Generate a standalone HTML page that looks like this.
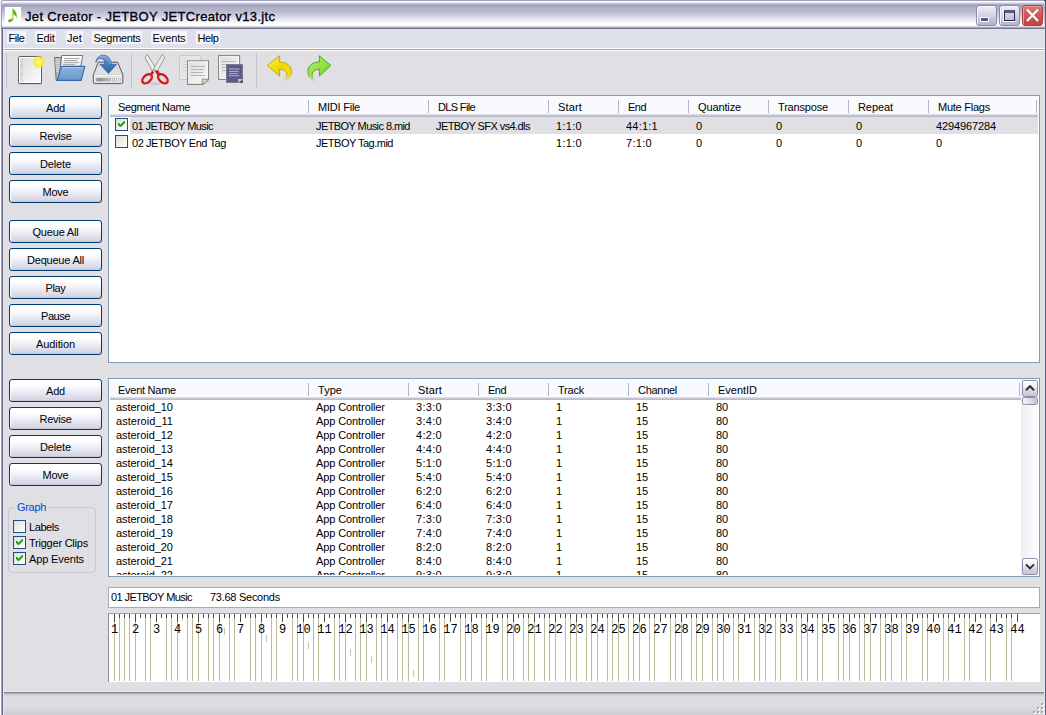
<!DOCTYPE html>
<html><head><meta charset="utf-8"><title>Jet Creator</title><style>html,body{margin:0;padding:0;}
body{width:1046px;height:715px;overflow:hidden;background:#e0dfe3;font-family:"Liberation Sans",sans-serif;font-size:11px;color:#000;position:relative;}
.abs{position:absolute;}
.t{position:absolute;white-space:nowrap;line-height:13px;height:13px;}
#titlebar{left:0;top:0;width:1046px;height:29px;background:linear-gradient(to bottom,#a09dba 0.5px,#ffffff 1.5px,#e6e6ee 2.5px,#c8c7d8 3.5px,#abaac4 4.5px,#a4a4c0 5.5px,#a8a8c2 6.5px,#aeaec6 7.5px,#b2b2c9 8.5px,#b4b5cb 9.5px,#b6b7cc 10.5px,#babbcf 11.5px,#c0c1d3 12.5px,#c4c5d6 13.5px,#c9cada 14.5px,#cfd0de 15.5px,#d5d6e2 16.5px,#dbdce6 17.5px,#e2e3eb 18.5px,#e8e9ef 19.5px,#eeeef3 20.5px,#f3f3f7 21.5px,#f8f8fa 22.5px,#fcfcfd 23.5px,#ffffff 24.5px,#fbfaf9 25.5px,#dedce0 26.5px,#a8a8bc 27.5px,#73738f 28.5px);}
#title{left:25px;top:9px;font-weight:normal;font-size:13px;line-height:16px;height:16px;color:#000010;letter-spacing:0.33px;-webkit-text-stroke:0.35px #000010;}
#menubar{left:3px;top:29px;width:1041px;height:19px;background:#dfe1ea;}
.mi{position:absolute;top:31px;height:13px;line-height:14px;background:#f5f5fb;white-space:nowrap;text-align:center;}
.btn{position:absolute;left:9px;width:91px;height:21px;border:1px solid #003c74;border-radius:3px;background:linear-gradient(to bottom,#ffffff 0%,#ffffff 20%,#f4f4fc 42%,#e8e8f2 62%,#dcdce8 82%,#d2d0e1 100%);box-shadow:inset 1px 0 0 #fff,inset 0 -1px 0 #c9c5d9;text-align:center;line-height:23px;}
.list{position:absolute;left:108px;width:930px;border:1px solid #7f9db9;background:#fff;}
.hdr{position:absolute;height:18px;background:#f9fafd;}
.hdr:after{content:"";position:absolute;left:0;right:0;top:18px;height:3px;background:linear-gradient(to bottom,#dcdce6 0,#dcdce6 1px,#c8c8d6 1px,#c8c8d6 2px,#b8b8c8 2px,#b8b8c8 3px);}
.sep{position:absolute;width:1px;background:#b4b4c8;height:13px;}
.cb{position:absolute;width:11px;height:11px;border:1px solid #1c5180;background:linear-gradient(135deg,#dcdcd7 0%,#f3f3f0 60%,#ffffff 100%);}
.gl{position:absolute;width:21px;text-align:center;font-family:"Liberation Mono",monospace;font-size:12px;line-height:14px;height:14px;white-space:nowrap;}
.capb{position:absolute;top:5px;width:19px;height:19px;border:1px solid #8a8aae;border-radius:3px;background:linear-gradient(to bottom,#ececf4 0%,#dcdce8 35%,#c4c4d8 70%,#b4b4cc 100%);box-shadow:inset 1px 1px 0 #f8f8fc;}
.capx{border-color:#b04444;background:linear-gradient(to bottom,#e07a74 0%,#d45c58 40%,#c84a48 75%,#c04444 100%);box-shadow:inset 1px 1px 0 #e89890;}
.sbb{position:absolute;left:1022px;width:14px;height:15px;border:1px solid #8e8eac;border-radius:2.5px;background:linear-gradient(to bottom,#ffffff 0%,#f4f4f9 30%,#d6d6e4 65%,#c4c4d8 100%);}
</style></head><body>
<div id="titlebar" class="abs"></div>
<div class="abs" style="left:5px;top:7px;width:16px;height:16px;background:#fff"></div>
<svg class="abs" style="left:5px;top:7px" width="16" height="16" viewBox="0 0 16 16"><ellipse cx="5.8" cy="13.3" rx="2.4" ry="1.6" transform="rotate(-25 5.8 13.3)" fill="#7cc41c"/><circle cx="4.3" cy="14.1" r="0.8" fill="#2c4a10"/><path d="M7.4 12.8 V1.2 C8.8 2.2 11.2 4 11.7 7.2 C11.9 9 11.7 10.6 11.5 11.8 C11.2 9.4 10 7.6 8.4 7 V13 Z" fill="#7cc41c"/><path d="M8.8 3 l1.2 1.2 M8.8 5 l2 1.8 M9.8 7.4 l1.2 1.6" stroke="#3c6414" stroke-width="0.9" stroke-dasharray="0.8 0.6" fill="none"/></svg>

<div id="title" class="t">Jet Creator - JETBOY JETCreator v13.jtc</div>
<div class="capb" style="left:976px"></div>
<div class="abs" style="left:980px;top:17px;width:9px;height:5px;background:#fff"></div>
<div class="abs" style="left:981px;top:18px;width:7px;height:3px;background:#55557e"></div>
<div class="capb" style="left:999px"></div>
<div class="abs" style="left:1003px;top:10px;width:12px;height:12px;background:#fff"></div>
<div class="abs" style="left:1004px;top:10px;width:9px;height:7px;border:1px solid #26264a;border-top:3px solid #55557e;background:linear-gradient(to bottom,#d4d4e2,#c0c0d4)"></div>
<div class="capb capx" style="left:1022px"></div>
<svg class="abs" style="left:1022px;top:5px" width="21" height="21" viewBox="0 0 21 21"><path d="M5 4.5 L16 16 M16 4.5 L5 16" stroke="#fff" stroke-width="2.2" stroke-linecap="butt" fill="none"/></svg>

<div class="abs" style="left:0;top:2px;width:1px;height:27px;background:#f0f0f6"></div>
<div class="abs" style="left:1px;top:1px;width:1px;height:28px;background:linear-gradient(to bottom,#b0b0c6,#9a9ab2 20%,#a6a6be 80%,#8c8ca6)"></div>
<div class="abs" style="left:0;top:0;width:2px;height:1px;background:#e8e8ee"></div><div class="abs" style="left:0;top:1px;width:1px;height:1px;background:#e8e8ee"></div>
<div class="abs" style="left:2px;top:2px;width:1px;height:2px;background:#f0f0f6"></div>
<div class="abs" style="left:1045px;top:0;width:1px;height:29px;background:#56567a"></div>
<div class="abs" style="left:1044px;top:2px;width:1px;height:27px;background:linear-gradient(to bottom,#e8e8f0,#b4b4ca 20%,#c4c4d6 60%,#e0e0ea 90%,#8c8ca6)"></div>
<div class="abs" style="left:1044px;top:0;width:2px;height:1px;background:#505070"></div><div class="abs" style="left:1045px;top:1px;width:1px;height:1px;background:#505070"></div><div class="abs" style="left:1044px;top:1px;width:1px;height:1px;background:#8c8ca8"></div>
<div id="menubar" class="abs"></div>
<div class="mi" style="left:7px;width:19px;letter-spacing:-0.43px">File</div>
<div class="mi" style="left:35px;width:21px;letter-spacing:-0.24px">Edit</div>
<div class="mi" style="left:66px;width:17px;letter-spacing:0.10px">Jet</div>
<div class="mi" style="left:92px;width:50px;letter-spacing:-0.32px">Segments</div>
<div class="mi" style="left:151px;width:36px;letter-spacing:-0.11px">Events</div>
<div class="mi" style="left:196px;width:24px;letter-spacing:-0.41px">Help</div>
<div class="abs" style="left:3px;top:48px;width:1041px;height:3px;background:#fff"></div>
<div class="abs" style="left:3px;top:49px;width:1041px;height:1px;background:#a0a0a6"></div>
<div class="abs" style="left:6px;top:53px;width:1px;height:35px;background:#c2c2cc"></div>
<div class="abs" style="left:131px;top:53px;width:1px;height:35px;background:#c2c2cc"></div>
<div class="abs" style="left:256px;top:53px;width:1px;height:35px;background:#c2c2cc"></div>
<svg class="abs" style="left:0;top:50px" width="350" height="42" viewBox="0 50 350 42">
<defs>
<linearGradient id="gPaper" x1="0" y1="0" x2="1" y2="1"><stop offset="0" stop-color="#dcdcdc"/><stop offset="1" stop-color="#fbfbfb"/></linearGradient>
<radialGradient id="gGlow"><stop offset="0" stop-color="#ffffff"/><stop offset="0.22" stop-color="#fbf66a"/><stop offset="0.6" stop-color="#f4ee28" stop-opacity="0.95"/><stop offset="1" stop-color="#f0ea20" stop-opacity="0"/></radialGradient>
<linearGradient id="gBlue" x1="0" y1="0" x2="0" y2="1"><stop offset="0" stop-color="#8fb4de"/><stop offset="0.5" stop-color="#7aa4d4"/><stop offset="1" stop-color="#6a98cc"/></linearGradient>
<linearGradient id="gGrayV" x1="0" y1="0" x2="0" y2="1"><stop offset="0" stop-color="#ffffff"/><stop offset="1" stop-color="#d8d8d8"/></linearGradient>
<linearGradient id="gDrive" x1="0" y1="0" x2="0" y2="1"><stop offset="0" stop-color="#dadada"/><stop offset="0.55" stop-color="#e2e2e2"/><stop offset="1" stop-color="#ececec"/></linearGradient>
<linearGradient id="gSlot" x1="0" y1="0" x2="1" y2="0"><stop offset="0" stop-color="#8c8c8c"/><stop offset="0.55" stop-color="#b8b8b8"/><stop offset="1" stop-color="#c4c4c4"/></linearGradient>
<linearGradient id="gArrowB" x1="0" y1="0" x2="0" y2="1"><stop offset="0" stop-color="#7fa8d8"/><stop offset="0.5" stop-color="#4a7cbc"/><stop offset="1" stop-color="#2f62a6"/></linearGradient>
<linearGradient id="gYel" x1="0" y1="0" x2="1" y2="1"><stop offset="0" stop-color="#fcee60"/><stop offset="0.5" stop-color="#efd800"/><stop offset="1" stop-color="#f4e020"/></linearGradient>
<linearGradient id="gGrn" x1="0" y1="0" x2="1" y2="1"><stop offset="0" stop-color="#b4ee78"/><stop offset="0.55" stop-color="#8ee040"/><stop offset="1" stop-color="#6cd010"/></linearGradient>
<linearGradient id="gFadeY" x1="0" y1="0" x2="0" y2="1"><stop offset="0" stop-color="#e0dfe3" stop-opacity="0"/><stop offset="0.75" stop-color="#e0dfe3" stop-opacity="0.9"/><stop offset="1" stop-color="#e0dfe3"/></linearGradient>
</defs>
<!-- new -->
<rect x="18.5" y="56.5" width="23" height="27" rx="1.2" fill="#fff" stroke="#5e5e5e"/>
<rect x="19" y="83" width="23" height="1.2" fill="#555" opacity="0.6"/>
<rect x="20" y="58" width="20" height="24" fill="url(#gPaper)"/>
<rect x="20" y="58" width="3" height="24" fill="#d4d4d4" opacity="0.6"/>
<rect x="21" y="65" width="1" height="1" fill="#999"/><rect x="21" y="74" width="1" height="1" fill="#999"/>
<circle cx="38.8" cy="62" r="6.9" fill="url(#gGlow)"/>
<!-- open -->
<path d="M54.5 57.5 H61.5 L60 80.5 H56.2 Z" fill="#b4b4b4" stroke="#6a6a6a" stroke-width="0.9"/>
<path d="M55.2 59.5H60M55.3 61.5H60M55.4 63.5H60M55.5 65.5H59.8M55.7 67.5H59.6M55.8 69.5H59.4M56 71.5H59.2" stroke="#dedede" stroke-width="0.9"/>
<path d="M61.7 55.5 H82.8 L80.6 67 L59.2 78 Z" fill="url(#gGrayV)" stroke="#6a6a6a" stroke-width="0.9"/>
<path d="M64 58.5H79.4M64 60.5H77M63.6 62.4H79M63.2 64.4H75" stroke="#a8a8a8" stroke-width="1"/>
<path d="M61.4 66.4 H84.8 L81.2 80.4 H57.2 Z" fill="url(#gBlue)" stroke="#3768ae" stroke-width="1.1" stroke-linejoin="round"/>
<path d="M62.4 67.6 H83.2" stroke="#b4d0ee" stroke-width="0.9"/>
<!-- save -->
<path d="M98.3 62.2 H117.6 L122.9 74.8 V82 Q122.9 83.6 121.3 83.6 H94.9 Q93.3 83.6 93.3 82 V74.8 Z" fill="url(#gDrive)" stroke="#585858" stroke-width="1" stroke-linejoin="round"/>
<path d="M94.2 75.2 H122 V82 Q122 82.8 121.2 82.8 H95 Q94.2 82.8 94.2 82 Z" fill="#e2e2e2"/>
<path d="M94.3 75.6 H121.9" stroke="#fafafa" stroke-width="1"/>
<path d="M94.6 74.6 H121.6" stroke="#c6c6c6" stroke-width="0.6"/>
<rect x="96.4" y="78" width="24.4" height="3.4" fill="url(#gSlot)"/>
<path d="M111.5 78V81.4M113.5 78V81.4M115.5 78V81.4M117.5 78V81.4M119.5 78V81.4" stroke="#ececec" stroke-width="0.9"/>
<path d="M95.9 62.4 C96 58 99.4 55.2 103.4 55.2 C107.8 55.2 110.9 58.4 111.2 64.3 H116.6 L108.5 73.4 L99.9 64.3 H105 C105 60.8 103.4 58.6 101 58.4 C98.6 58.3 96.8 60 95.9 62.4 Z" fill="url(#gArrowB)" stroke="#2a5a9e" stroke-width="0.7" stroke-linejoin="round"/>
<path d="M97 59.6 C98.2 57.4 100.4 56.3 103.2 56.3 C107 56.3 109.8 59 110.2 64" stroke="#9cc0e6" stroke-width="0.8" fill="none" opacity="0.8"/>
<!-- cut -->
<ellipse cx="154.8" cy="83.6" rx="6" ry="1.2" fill="#b8b8bc" opacity="0.6"/>
<path d="M147.2 54.3 L145 57.8 L152.4 70.8 L156.6 69.6 Z" fill="#ecece9" stroke="#8a8c86" stroke-width="0.8" stroke-linejoin="round"/>
<path d="M162.4 54.3 L164.7 57.8 L157.4 70.8 L153.2 69.6 Z" fill="#ecece9" stroke="#8a8c86" stroke-width="0.8" stroke-linejoin="round"/>
<path d="M152.2 70.6 L154.2 72.4 L152.2 75 L150.2 73.4 Z" fill="#d41a1a"/>
<path d="M154.6 70.8 L158.4 70.4 L160.4 74.6 L157.6 75.8 Z" fill="#d41a1a"/>
<ellipse cx="147.1" cy="78.7" rx="5.6" ry="3.5" transform="rotate(-42 147.1 78.7)" fill="none" stroke="#d41a1a" stroke-width="2.4"/>
<ellipse cx="162.9" cy="78.7" rx="5.6" ry="3.5" transform="rotate(42 162.9 78.7)" fill="none" stroke="#d41a1a" stroke-width="2.4"/>
<!-- copy -->
<rect x="179.5" y="55.5" width="21.4" height="24" rx="0.8" fill="#e6e6e6" stroke="#c6c6c6" stroke-width="0.9"/>
<path d="M183 61.5H190M183 64.5H190M183 67.5H190M183 70.5H190" stroke="#d2d2d2" stroke-width="1"/>
<path d="M187.6 60.8 H208.5 V79.6 L203 84.4 H187.6 Z" fill="#fff" stroke="#84867e" stroke-width="1.1" stroke-linejoin="round"/>
<path d="M189 62.2 H207.2 V79 L202.4 83 H189 Z" fill="url(#gPaper)"/>
<path d="M191 66.5H205M191 69.5H204M191 72.5H203M191 75.5H205" stroke="#b2b2b2" stroke-width="1"/>
<path d="M202.2 84 V79.2 H208.4 C207.6 82 205 83.6 202.2 84 Z" fill="#d0d0cc" stroke="#84867e" stroke-width="0.9" stroke-linejoin="round"/>
<!-- paste -->
<rect x="218.6" y="55.6" width="21" height="23.8" fill="#fff" stroke="#85877a" stroke-width="1.1"/>
<rect x="220.2" y="57.2" width="17.8" height="20.6" fill="url(#gPaper)"/>
<path d="M222 61.5H236M222 64.5H236M222 67.5H236M222 70.5H236" stroke="#b6b6b6" stroke-width="1"/>
<rect x="226.5" y="64.5" width="16" height="18" fill="#5b5b8b" stroke="#77778c" stroke-width="0.9"/>
<path d="M229 69H239.6" stroke="#9090b6" stroke-width="1.7"/>
<path d="M229 71.5H238.8M229 73.6H238M229 75.7H239.6" stroke="#b4b4d0" stroke-width="0.9"/>
<path d="M238 79 H242.6 V82.6 H238 Z" fill="#9a9a9a"/><path d="M240 82.6 L242.6 80.4 V82.6 Z" fill="#111"/><path d="M238 79 H242 L238 82 Z" fill="#c8c8c8"/>
<!-- undo -->
<path d="M267.2 65.4 L279.6 55.8 V62 C284 62 287.6 63.4 289.8 66.4 C292 69.6 292 73.6 290 76.6 C288.2 79.4 285.4 81.2 282.2 82 C285.4 79.6 287.4 76.8 286.8 73.6 C286.2 70.8 283.6 69.4 279.6 69.3 V76 Z" fill="url(#gYel)" stroke="#c0a000" stroke-width="0.9" stroke-linejoin="round"/>
<rect x="280.2" y="74.5" width="12.6" height="8.5" fill="url(#gFadeY)"/>
<!-- redo -->
<path d="M330.8 65.4 L319.4 55.8 V62 C315 62 311.4 63.4 309.4 66.4 C307.4 69.6 307.4 73.6 309.2 76.6 C310.8 79.2 313 80.8 316 81.4 C313.4 79.4 311.6 76.8 312.2 73.6 C312.8 70.8 315.4 69.4 319.4 69.3 V76 Z" fill="url(#gGrn)" stroke="#4e9e08" stroke-width="0.9" stroke-linejoin="round"/>
<rect x="307" y="74.5" width="11" height="8.5" fill="url(#gFadeY)"/>
</svg>

<div class="btn" style="top:96px;"><span style="letter-spacing:-0.20px">Add</span></div>
<div class="btn" style="top:124px;"><span style="letter-spacing:-0.27px">Revise</span></div>
<div class="btn" style="top:152px;"><span style="letter-spacing:-0.14px">Delete</span></div>
<div class="btn" style="top:180px;"><span style="letter-spacing:-0.23px">Move</span></div>
<div class="btn" style="top:220px;"><span style="letter-spacing:-0.19px">Queue All</span></div>
<div class="btn" style="top:248px;"><span style="letter-spacing:-0.21px">Dequeue All</span></div>
<div class="btn" style="top:276px;"><span style="letter-spacing:-0.35px">Play</span></div>
<div class="btn" style="top:304px;"><span style="letter-spacing:-0.44px">Pause</span></div>
<div class="btn" style="top:332px;"><span style="letter-spacing:-0.10px">Audition</span></div>
<div class="btn" style="top:379px;"><span style="letter-spacing:-0.20px">Add</span></div>
<div class="btn" style="top:407px;"><span style="letter-spacing:-0.27px">Revise</span></div>
<div class="btn" style="top:435px;"><span style="letter-spacing:-0.14px">Delete</span></div>
<div class="btn" style="top:463px;"><span style="letter-spacing:-0.23px">Move</span></div>
<div class="list" style="top:95px;height:266px;"></div>
<div class="hdr" style="left:110px;top:96px;width:928px"></div>
<div class="t" style="left:118px;top:101px;letter-spacing:-0.37px;">Segment Name</div>
<div class="sep" style="left:308px;top:100px"></div>
<div class="t" style="left:318px;top:101px;letter-spacing:-0.22px;">MIDI File</div>
<div class="sep" style="left:428px;top:100px"></div>
<div class="t" style="left:438px;top:101px;letter-spacing:-0.65px;">DLS File</div>
<div class="sep" style="left:548px;top:100px"></div>
<div class="t" style="left:558px;top:101px;letter-spacing:0.15px;">Start</div>
<div class="sep" style="left:618px;top:100px"></div>
<div class="t" style="left:628px;top:101px;letter-spacing:-0.53px;">End</div>
<div class="sep" style="left:688px;top:100px"></div>
<div class="t" style="left:698px;top:101px;letter-spacing:-0.13px;">Quantize</div>
<div class="sep" style="left:768px;top:100px"></div>
<div class="t" style="left:778px;top:101px;letter-spacing:-0.18px;">Transpose</div>
<div class="sep" style="left:848px;top:100px"></div>
<div class="t" style="left:858px;top:101px;letter-spacing:-0.08px;">Repeat</div>
<div class="sep" style="left:928px;top:100px"></div>
<div class="t" style="left:938px;top:101px;letter-spacing:-0.24px;">Mute Flags</div>
<div class="sep" style="left:1036px;top:100px"></div>
<div class="abs" style="left:130px;top:117px;width:908px;height:17px;background:#e0dfe3"></div>
<div class="cb" style="left:115px;top:118px"></div>
<svg class="abs" style="left:118px;top:121px" width="7" height="7" viewBox="0 0 7 7"><path d="M0 2 L0 4 L2 6 L3 6 L7 2 L7 0 L6 0 L2.5 3.6 L1 2 Z" fill="#21a121"/></svg>
<div class="t" style="left:132px;top:120px;letter-spacing:-0.58px;">01 JETBOY Music</div>
<div class="t" style="left:316px;top:120px;letter-spacing:-0.58px;">JETBOY Music 8.mid</div>
<div class="t" style="left:436px;top:120px;letter-spacing:-0.58px;">JETBOY SFX vs4.dls</div>
<div class="t" style="left:556px;top:120px;letter-spacing:0.30px;">1:1:0</div>
<div class="t" style="left:626px;top:120px;letter-spacing:0.23px;">44:1:1</div>
<div class="t" style="left:696px;top:120px;letter-spacing:-0.12px;">0</div>
<div class="t" style="left:776px;top:120px;letter-spacing:-0.12px;">0</div>
<div class="t" style="left:856px;top:120px;letter-spacing:-0.12px;">0</div>
<div class="t" style="left:936px;top:120px;letter-spacing:-0.12px;">4294967284</div>
<div class="cb" style="left:115px;top:135px"></div>
<div class="t" style="left:132px;top:137px;letter-spacing:-0.42px;">02 JETBOY End Tag</div>
<div class="t" style="left:316px;top:137px;letter-spacing:-0.50px;">JETBOY Tag.mid</div>
<div class="t" style="left:556px;top:137px;letter-spacing:0.30px;">1:1:0</div>
<div class="t" style="left:626px;top:137px;letter-spacing:0.30px;">7:1:0</div>
<div class="t" style="left:696px;top:137px;letter-spacing:-0.12px;">0</div>
<div class="t" style="left:776px;top:137px;letter-spacing:-0.12px;">0</div>
<div class="t" style="left:856px;top:137px;letter-spacing:-0.12px;">0</div>
<div class="t" style="left:936px;top:137px;letter-spacing:-0.12px;">0</div>
<div class="list" style="top:378px;height:197px;"></div>
<div class="hdr" style="left:110px;top:379px;width:911px"></div>
<div class="t" style="left:118px;top:384px;letter-spacing:-0.26px;">Event Name</div>
<div class="sep" style="left:308px;top:383px"></div>
<div class="t" style="left:318px;top:384px;letter-spacing:0.04px;">Type</div>
<div class="sep" style="left:408px;top:383px"></div>
<div class="t" style="left:418px;top:384px;letter-spacing:0.15px;">Start</div>
<div class="sep" style="left:478px;top:383px"></div>
<div class="t" style="left:488px;top:384px;letter-spacing:-0.53px;">End</div>
<div class="sep" style="left:548px;top:383px"></div>
<div class="t" style="left:558px;top:384px;letter-spacing:-0.22px;">Track</div>
<div class="sep" style="left:628px;top:383px"></div>
<div class="t" style="left:638px;top:384px;letter-spacing:-0.29px;">Channel</div>
<div class="sep" style="left:708px;top:383px"></div>
<div class="t" style="left:718px;top:384px;letter-spacing:-0.02px;">EventID</div>
<div class="sep" style="left:1019px;top:383px"></div>
<div class="abs" style="left:109px;top:400px;width:912px;height:175px;overflow:hidden">
<div class="t" style="left:7px;top:1px;letter-spacing:-0.05px;">asteroid_10</div>
<div class="t" style="left:207px;top:1px;letter-spacing:-0.10px;">App Controller</div>
<div class="t" style="left:307px;top:1px;letter-spacing:0.30px;">3:3:0</div>
<div class="t" style="left:377px;top:1px;letter-spacing:0.30px;">3:3:0</div>
<div class="t" style="left:447px;top:1px;letter-spacing:-0.12px;">1</div>
<div class="t" style="left:527px;top:1px;letter-spacing:-0.12px;">15</div>
<div class="t" style="left:607px;top:1px;letter-spacing:-0.12px;">80</div>
<div class="t" style="left:7px;top:15px;letter-spacing:0.03px;">asteroid_11</div>
<div class="t" style="left:207px;top:15px;letter-spacing:-0.10px;">App Controller</div>
<div class="t" style="left:307px;top:15px;letter-spacing:0.30px;">3:4:0</div>
<div class="t" style="left:377px;top:15px;letter-spacing:0.30px;">3:4:0</div>
<div class="t" style="left:447px;top:15px;letter-spacing:-0.12px;">1</div>
<div class="t" style="left:527px;top:15px;letter-spacing:-0.12px;">15</div>
<div class="t" style="left:607px;top:15px;letter-spacing:-0.12px;">80</div>
<div class="t" style="left:7px;top:29px;letter-spacing:-0.05px;">asteroid_12</div>
<div class="t" style="left:207px;top:29px;letter-spacing:-0.10px;">App Controller</div>
<div class="t" style="left:307px;top:29px;letter-spacing:0.30px;">4:2:0</div>
<div class="t" style="left:377px;top:29px;letter-spacing:0.30px;">4:2:0</div>
<div class="t" style="left:447px;top:29px;letter-spacing:-0.12px;">1</div>
<div class="t" style="left:527px;top:29px;letter-spacing:-0.12px;">15</div>
<div class="t" style="left:607px;top:29px;letter-spacing:-0.12px;">80</div>
<div class="t" style="left:7px;top:43px;letter-spacing:-0.05px;">asteroid_13</div>
<div class="t" style="left:207px;top:43px;letter-spacing:-0.10px;">App Controller</div>
<div class="t" style="left:307px;top:43px;letter-spacing:0.30px;">4:4:0</div>
<div class="t" style="left:377px;top:43px;letter-spacing:0.30px;">4:4:0</div>
<div class="t" style="left:447px;top:43px;letter-spacing:-0.12px;">1</div>
<div class="t" style="left:527px;top:43px;letter-spacing:-0.12px;">15</div>
<div class="t" style="left:607px;top:43px;letter-spacing:-0.12px;">80</div>
<div class="t" style="left:7px;top:57px;letter-spacing:-0.05px;">asteroid_14</div>
<div class="t" style="left:207px;top:57px;letter-spacing:-0.10px;">App Controller</div>
<div class="t" style="left:307px;top:57px;letter-spacing:0.30px;">5:1:0</div>
<div class="t" style="left:377px;top:57px;letter-spacing:0.30px;">5:1:0</div>
<div class="t" style="left:447px;top:57px;letter-spacing:-0.12px;">1</div>
<div class="t" style="left:527px;top:57px;letter-spacing:-0.12px;">15</div>
<div class="t" style="left:607px;top:57px;letter-spacing:-0.12px;">80</div>
<div class="t" style="left:7px;top:71px;letter-spacing:-0.05px;">asteroid_15</div>
<div class="t" style="left:207px;top:71px;letter-spacing:-0.10px;">App Controller</div>
<div class="t" style="left:307px;top:71px;letter-spacing:0.30px;">5:4:0</div>
<div class="t" style="left:377px;top:71px;letter-spacing:0.30px;">5:4:0</div>
<div class="t" style="left:447px;top:71px;letter-spacing:-0.12px;">1</div>
<div class="t" style="left:527px;top:71px;letter-spacing:-0.12px;">15</div>
<div class="t" style="left:607px;top:71px;letter-spacing:-0.12px;">80</div>
<div class="t" style="left:7px;top:85px;letter-spacing:-0.05px;">asteroid_16</div>
<div class="t" style="left:207px;top:85px;letter-spacing:-0.10px;">App Controller</div>
<div class="t" style="left:307px;top:85px;letter-spacing:0.30px;">6:2:0</div>
<div class="t" style="left:377px;top:85px;letter-spacing:0.30px;">6:2:0</div>
<div class="t" style="left:447px;top:85px;letter-spacing:-0.12px;">1</div>
<div class="t" style="left:527px;top:85px;letter-spacing:-0.12px;">15</div>
<div class="t" style="left:607px;top:85px;letter-spacing:-0.12px;">80</div>
<div class="t" style="left:7px;top:99px;letter-spacing:-0.05px;">asteroid_17</div>
<div class="t" style="left:207px;top:99px;letter-spacing:-0.10px;">App Controller</div>
<div class="t" style="left:307px;top:99px;letter-spacing:0.30px;">6:4:0</div>
<div class="t" style="left:377px;top:99px;letter-spacing:0.30px;">6:4:0</div>
<div class="t" style="left:447px;top:99px;letter-spacing:-0.12px;">1</div>
<div class="t" style="left:527px;top:99px;letter-spacing:-0.12px;">15</div>
<div class="t" style="left:607px;top:99px;letter-spacing:-0.12px;">80</div>
<div class="t" style="left:7px;top:113px;letter-spacing:-0.05px;">asteroid_18</div>
<div class="t" style="left:207px;top:113px;letter-spacing:-0.10px;">App Controller</div>
<div class="t" style="left:307px;top:113px;letter-spacing:0.30px;">7:3:0</div>
<div class="t" style="left:377px;top:113px;letter-spacing:0.30px;">7:3:0</div>
<div class="t" style="left:447px;top:113px;letter-spacing:-0.12px;">1</div>
<div class="t" style="left:527px;top:113px;letter-spacing:-0.12px;">15</div>
<div class="t" style="left:607px;top:113px;letter-spacing:-0.12px;">80</div>
<div class="t" style="left:7px;top:127px;letter-spacing:-0.05px;">asteroid_19</div>
<div class="t" style="left:207px;top:127px;letter-spacing:-0.10px;">App Controller</div>
<div class="t" style="left:307px;top:127px;letter-spacing:0.30px;">7:4:0</div>
<div class="t" style="left:377px;top:127px;letter-spacing:0.30px;">7:4:0</div>
<div class="t" style="left:447px;top:127px;letter-spacing:-0.12px;">1</div>
<div class="t" style="left:527px;top:127px;letter-spacing:-0.12px;">15</div>
<div class="t" style="left:607px;top:127px;letter-spacing:-0.12px;">80</div>
<div class="t" style="left:7px;top:141px;letter-spacing:-0.05px;">asteroid_20</div>
<div class="t" style="left:207px;top:141px;letter-spacing:-0.10px;">App Controller</div>
<div class="t" style="left:307px;top:141px;letter-spacing:0.30px;">8:2:0</div>
<div class="t" style="left:377px;top:141px;letter-spacing:0.30px;">8:2:0</div>
<div class="t" style="left:447px;top:141px;letter-spacing:-0.12px;">1</div>
<div class="t" style="left:527px;top:141px;letter-spacing:-0.12px;">15</div>
<div class="t" style="left:607px;top:141px;letter-spacing:-0.12px;">80</div>
<div class="t" style="left:7px;top:155px;letter-spacing:-0.05px;">asteroid_21</div>
<div class="t" style="left:207px;top:155px;letter-spacing:-0.10px;">App Controller</div>
<div class="t" style="left:307px;top:155px;letter-spacing:0.30px;">8:4:0</div>
<div class="t" style="left:377px;top:155px;letter-spacing:0.30px;">8:4:0</div>
<div class="t" style="left:447px;top:155px;letter-spacing:-0.12px;">1</div>
<div class="t" style="left:527px;top:155px;letter-spacing:-0.12px;">15</div>
<div class="t" style="left:607px;top:155px;letter-spacing:-0.12px;">80</div>
<div class="t" style="left:7px;top:169px;letter-spacing:-0.05px;">asteroid_22</div>
<div class="t" style="left:207px;top:169px;letter-spacing:-0.10px;">App Controller</div>
<div class="t" style="left:307px;top:169px;letter-spacing:0.30px;">9:3:0</div>
<div class="t" style="left:377px;top:169px;letter-spacing:0.30px;">9:3:0</div>
<div class="t" style="left:447px;top:169px;letter-spacing:-0.12px;">1</div>
<div class="t" style="left:527px;top:169px;letter-spacing:-0.12px;">15</div>
<div class="t" style="left:607px;top:169px;letter-spacing:-0.12px;">80</div>
</div>
<div class="abs" style="left:1021px;top:379px;width:17px;height:197px;background:linear-gradient(to right,#ebebf3,#f6f6fa 50%,#fdfdfe)"></div>
<div class="sbb" style="top:380px"></div>
<svg class="abs" style="left:1022px;top:380px" width="16" height="17" viewBox="0 0 16 17"><path d="M4 10.2 L8 6.2 L12 10.2" stroke="#2e2e36" stroke-width="2" fill="none" stroke-linejoin="miter"/></svg>
<div class="sbb" style="top:397px;height:6px;background:linear-gradient(to right,#f4f4f9,#dcdce8 50%,#c2c2d6)"></div>
<div class="sbb" style="top:558px"></div>
<svg class="abs" style="left:1022px;top:558px" width="16" height="17" viewBox="0 0 16 17"><path d="M4 6.4 L8 10.4 L12 6.4" stroke="#2e2e36" stroke-width="2" fill="none" stroke-linejoin="miter"/></svg>

<div class="abs" style="left:8px;top:507px;width:86px;height:64px;border:1px solid #c9c7d1;border-radius:4px;"></div>
<div class="t" style="left:14px;top:501px;padding:0 3px;background:#e0dfe3;color:#0046d5;letter-spacing:-0.32px">Graph</div>
<div class="cb" style="left:13px;top:520px"></div>
<div class="t" style="left:29px;top:521px;letter-spacing:-0.41px;">Labels</div>
<div class="cb" style="left:13px;top:536px"></div>
<svg class="abs" style="left:16px;top:539px" width="7" height="7" viewBox="0 0 7 7"><path d="M0 2 L0 4 L2 6 L3 6 L7 2 L7 0 L6 0 L2.5 3.6 L1 2 Z" fill="#21a121"/></svg>
<div class="t" style="left:29px;top:537px;letter-spacing:-0.23px;">Trigger Clips</div>
<div class="cb" style="left:13px;top:552px"></div>
<svg class="abs" style="left:16px;top:555px" width="7" height="7" viewBox="0 0 7 7"><path d="M0 2 L0 4 L2 6 L3 6 L7 2 L7 0 L6 0 L2.5 3.6 L1 2 Z" fill="#21a121"/></svg>
<div class="t" style="left:29px;top:553px;letter-spacing:-0.13px;">App Events</div>
<div class="abs" style="left:108px;top:587px;width:930px;height:19px;border:1px solid #a5acb9;background:#fff"></div>
<div class="t" style="left:111px;top:591px;letter-spacing:-0.58px;">01 JETBOY Music</div>
<div class="t" style="left:210px;top:591px;letter-spacing:-0.27px;">73.68 Seconds</div>
<div class="abs" style="left:108px;top:613px;width:932px;height:69px;background:#fff;border-left:1px solid #8e8e98;border-top:1px solid #a0a0aa;box-sizing:border-box"></div>
<svg class="abs" style="left:108px;top:613px" width="932" height="69" viewBox="108 613 932 69" shape-rendering="crispEdges"><path d="M114.5 622V681M119.5 618V681M124.5 618V681M129.5 618V681M135.5 622V681M145.5 618V681M150.5 618V681M166.5 618V681M171.5 618V681M177.5 622V681M187.5 618V681M192.5 618V681M198.5 622V681M208.5 618V681M213.5 618V681M219.5 622V681M229.5 618V681M234.5 618V681M250.5 618V681M255.5 618V681M261.5 622V681M271.5 618V681M276.5 618V681M292.5 618V681M297.5 618V681M303.5 622V681M313.5 618V681M318.5 618V681M334.5 618V681M339.5 618V681M345.5 622V681M355.5 618V681M360.5 618V681M366.5 622V681M376.5 618V681M381.5 618V681M387.5 622V681M397.5 618V681M402.5 618V681M408.5 622V681M418.5 618V681M423.5 618V681M439.5 618V681M444.5 618V681M460.5 618V681M465.5 618V681M471.5 622V681M481.5 618V681M486.5 618V681M502.5 618V681M507.5 618V681M513.5 622V681M523.5 618V681M528.5 618V681M534.5 622V681M544.5 618V681M549.5 618V681M555.5 622V681M565.5 618V681M570.5 618V681M576.5 622V681M586.5 618V681M591.5 618V681M597.5 622V681M607.5 618V681M612.5 618V681M618.5 622V681M628.5 618V681M633.5 618V681M639.5 622V681M649.5 618V681M654.5 618V681M670.5 618V681M675.5 618V681M681.5 622V681M691.5 618V681M696.5 618V681M702.5 622V681M712.5 618V681M717.5 618V681M723.5 622V681M733.5 618V681M738.5 618V681M754.5 618V681M759.5 618V681M765.5 622V681M775.5 618V681M780.5 618V681M796.5 618V681M801.5 618V681M807.5 622V681M817.5 618V681M822.5 618V681M838.5 618V681M843.5 618V681M849.5 622V681M859.5 618V681M864.5 618V681M870.5 622V681M880.5 618V681M885.5 618V681M891.5 622V681M901.5 618V681M906.5 618V681M922.5 618V681M927.5 618V681M943.5 618V681M948.5 618V681M964.5 618V681M969.5 618V681M985.5 618V681M990.5 618V681M1006.5 618V681M1011.5 618V681" stroke="#b9bb9a" stroke-width="1" fill="none"/><path d="M182.5 614V621M224.5 628V635M266.5 635V642M308.5 642V649M350.5 649V656M371.5 656V663M413.5 670V677" stroke="#c3c5a4" stroke-width="1" fill="none"/><path d="M114.5 614V622M135.5 614V622M156.5 614V622M177.5 614V622M198.5 614V622M219.5 614V622M240.5 614V622M261.5 614V622M282.5 614V622M303.5 614V622M324.5 614V622M345.5 614V622M366.5 614V622M387.5 614V622M408.5 614V622M429.5 614V622M450.5 614V622M471.5 614V622M492.5 614V622M513.5 614V622M534.5 614V622M555.5 614V622M576.5 614V622M597.5 614V622M618.5 614V622M639.5 614V622M660.5 614V622M681.5 614V622M702.5 614V622M723.5 614V622M744.5 614V622M765.5 614V622M786.5 614V622M807.5 614V622M828.5 614V622M849.5 614V622M870.5 614V622M891.5 614V622M912.5 614V622M933.5 614V622M954.5 614V622M975.5 614V622M996.5 614V622M1017.5 614V622M119.5 614V618M124.5 614V618M129.5 614V618M140.5 614V618M145.5 614V618M150.5 614V618M161.5 614V618M166.5 614V618M171.5 614V618M182.5 614V618M187.5 614V618M192.5 614V618M203.5 614V618M208.5 614V618M213.5 614V618M224.5 614V618M229.5 614V618M234.5 614V618M245.5 614V618M250.5 614V618M255.5 614V618M266.5 614V618M271.5 614V618M276.5 614V618M287.5 614V618M292.5 614V618M297.5 614V618M308.5 614V618M313.5 614V618M318.5 614V618M329.5 614V618M334.5 614V618M339.5 614V618M350.5 614V618M355.5 614V618M360.5 614V618M371.5 614V618M376.5 614V618M381.5 614V618M392.5 614V618M397.5 614V618M402.5 614V618M413.5 614V618M418.5 614V618M423.5 614V618M434.5 614V618M439.5 614V618M444.5 614V618M455.5 614V618M460.5 614V618M465.5 614V618M476.5 614V618M481.5 614V618M486.5 614V618M497.5 614V618M502.5 614V618M507.5 614V618M518.5 614V618M523.5 614V618M528.5 614V618M539.5 614V618M544.5 614V618M549.5 614V618M560.5 614V618M565.5 614V618M570.5 614V618M581.5 614V618M586.5 614V618M591.5 614V618M602.5 614V618M607.5 614V618M612.5 614V618M623.5 614V618M628.5 614V618M633.5 614V618M644.5 614V618M649.5 614V618M654.5 614V618M665.5 614V618M670.5 614V618M675.5 614V618M686.5 614V618M691.5 614V618M696.5 614V618M707.5 614V618M712.5 614V618M717.5 614V618M728.5 614V618M733.5 614V618M738.5 614V618M749.5 614V618M754.5 614V618M759.5 614V618M770.5 614V618M775.5 614V618M780.5 614V618M791.5 614V618M796.5 614V618M801.5 614V618M812.5 614V618M817.5 614V618M822.5 614V618M833.5 614V618M838.5 614V618M843.5 614V618M854.5 614V618M859.5 614V618M864.5 614V618M875.5 614V618M880.5 614V618M885.5 614V618M896.5 614V618M901.5 614V618M906.5 614V618M917.5 614V618M922.5 614V618M927.5 614V618M938.5 614V618M943.5 614V618M948.5 614V618M959.5 614V618M964.5 614V618M969.5 614V618M980.5 614V618M985.5 614V618M990.5 614V618M1001.5 614V618M1006.5 614V618M1011.5 614V618" stroke="#5a4640" stroke-width="1" fill="none"/></svg>
<div class="gl" style="left:104px;top:623px">1</div>
<div class="gl" style="left:125px;top:623px">2</div>
<div class="gl" style="left:146px;top:623px">3</div>
<div class="gl" style="left:167px;top:623px">4</div>
<div class="gl" style="left:188px;top:623px">5</div>
<div class="gl" style="left:209px;top:623px">6</div>
<div class="gl" style="left:230px;top:623px">7</div>
<div class="gl" style="left:251px;top:623px">8</div>
<div class="gl" style="left:272px;top:623px">9</div>
<div class="gl" style="left:293px;top:623px">10</div>
<div class="gl" style="left:314px;top:623px">11</div>
<div class="gl" style="left:335px;top:623px">12</div>
<div class="gl" style="left:356px;top:623px">13</div>
<div class="gl" style="left:377px;top:623px">14</div>
<div class="gl" style="left:398px;top:623px">15</div>
<div class="gl" style="left:419px;top:623px">16</div>
<div class="gl" style="left:440px;top:623px">17</div>
<div class="gl" style="left:461px;top:623px">18</div>
<div class="gl" style="left:482px;top:623px">19</div>
<div class="gl" style="left:503px;top:623px">20</div>
<div class="gl" style="left:524px;top:623px">21</div>
<div class="gl" style="left:545px;top:623px">22</div>
<div class="gl" style="left:566px;top:623px">23</div>
<div class="gl" style="left:587px;top:623px">24</div>
<div class="gl" style="left:608px;top:623px">25</div>
<div class="gl" style="left:629px;top:623px">26</div>
<div class="gl" style="left:650px;top:623px">27</div>
<div class="gl" style="left:671px;top:623px">28</div>
<div class="gl" style="left:692px;top:623px">29</div>
<div class="gl" style="left:713px;top:623px">30</div>
<div class="gl" style="left:734px;top:623px">31</div>
<div class="gl" style="left:755px;top:623px">32</div>
<div class="gl" style="left:776px;top:623px">33</div>
<div class="gl" style="left:797px;top:623px">34</div>
<div class="gl" style="left:818px;top:623px">35</div>
<div class="gl" style="left:839px;top:623px">36</div>
<div class="gl" style="left:860px;top:623px">37</div>
<div class="gl" style="left:881px;top:623px">38</div>
<div class="gl" style="left:902px;top:623px">39</div>
<div class="gl" style="left:923px;top:623px">40</div>
<div class="gl" style="left:944px;top:623px">41</div>
<div class="gl" style="left:965px;top:623px">42</div>
<div class="gl" style="left:986px;top:623px">43</div>
<div class="gl" style="left:1007px;top:623px">44</div>
<div class="abs" style="left:3px;top:691px;width:1041px;height:1px;background:#e9e9ed"></div><div class="abs" style="left:3px;top:692px;width:1041px;height:23px;background:linear-gradient(to bottom,#88888f 0.5px,#b4b5bc 1.5px,#cacbd1 2.5px,#d4d5db 3.5px,#dadbe1 4.5px,#dddee4 6.5px,#dcdde3 14.5px,#d6d7dd 18.5px,#cdced4 22.5px)"></div>
<div class="abs" style="left:1042px;top:704px;width:2px;height:2px;background:#fff"></div><div class="abs" style="left:1041px;top:703px;width:2px;height:2px;background:#b4ac90"></div><div class="abs" style="left:1038px;top:708px;width:2px;height:2px;background:#fff"></div><div class="abs" style="left:1037px;top:707px;width:2px;height:2px;background:#b4ac90"></div><div class="abs" style="left:1042px;top:708px;width:2px;height:2px;background:#fff"></div><div class="abs" style="left:1041px;top:707px;width:2px;height:2px;background:#b4ac90"></div><div class="abs" style="left:1034px;top:712px;width:2px;height:2px;background:#fff"></div><div class="abs" style="left:1033px;top:711px;width:2px;height:2px;background:#b4ac90"></div><div class="abs" style="left:1038px;top:712px;width:2px;height:2px;background:#fff"></div><div class="abs" style="left:1037px;top:711px;width:2px;height:2px;background:#b4ac90"></div><div class="abs" style="left:1042px;top:712px;width:2px;height:2px;background:#fff"></div><div class="abs" style="left:1041px;top:711px;width:2px;height:2px;background:#b4ac90"></div>
<div class="abs" style="left:0;top:29px;width:1px;height:686px;background:#fff"></div>
<div class="abs" style="left:1px;top:29px;width:1px;height:686px;background:#a4a4be"></div>
<div class="abs" style="left:2px;top:29px;width:1px;height:686px;background:#666688"></div>
<div class="abs" style="left:3px;top:29px;width:1px;height:686px;background:#e9e9ed"></div>
<div class="abs" style="left:1044px;top:29px;width:1px;height:686px;background:#e9e9ed"></div>
<div class="abs" style="left:1045px;top:29px;width:1px;height:686px;background:#5a5a78"></div>
</body></html>
